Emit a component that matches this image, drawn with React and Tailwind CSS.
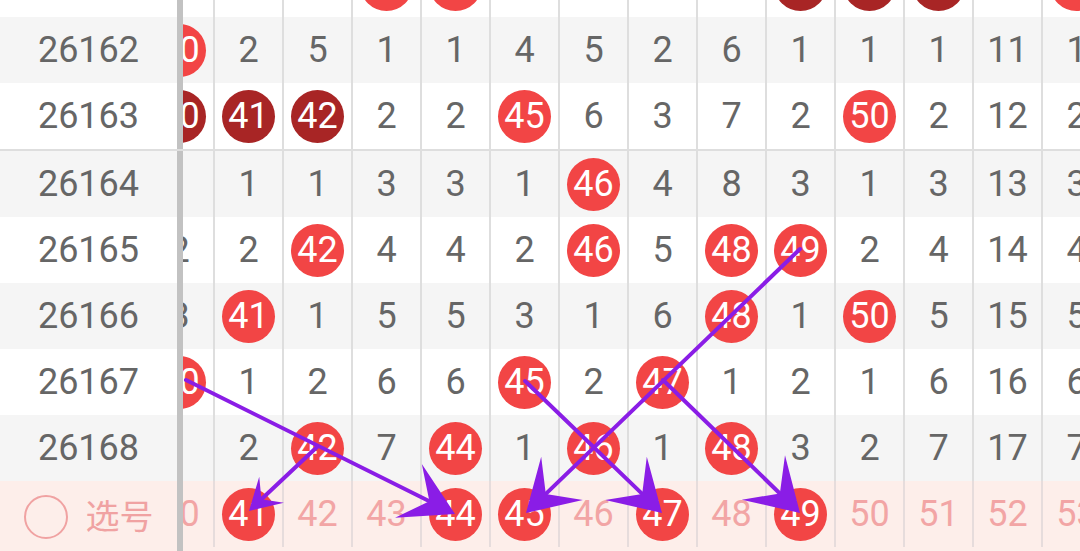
import React from "react"

// columns 40..53, "R" = red ball, "D" = dark ball
const rows = [
  { no: "", gray: false, cells: ["", "", "", "R", "R", "", "", "", "", "D", "D", "D", "", "R"], blank: true },
  { no: "26162", gray: true, cells: ["R", 2, 5, 1, 1, 4, 5, 2, 6, 1, 1, 1, 11, 1] },
  { no: "26163", gray: false, line: true, cells: ["D", "D", "D", 2, 2, "R", 6, 3, 7, 2, "R", 2, 12, 2] },
  { no: "26164", gray: true, cells: [1, 1, 1, 3, 3, 1, "R", 4, 8, 3, 1, 3, 13, 3] },
  { no: "26165", gray: false, cells: [2, 2, "R", 4, 4, 2, "R", 5, "R", "R", 2, 4, 14, 4] },
  { no: "26166", gray: true, cells: [3, "R", 1, 5, 5, 3, 1, 6, "R", 1, "R", 5, 15, 5] },
  { no: "26167", gray: false, cells: ["R", 1, 2, 6, 6, "R", 2, "R", 1, 2, 1, 6, 16, 6] },
  { no: "26168", gray: true, cells: [1, 2, "R", 7, "R", 1, "R", 1, "R", 3, 2, 7, 17, 7] },
]

const picked = [41, 44, 45, 47, 49]

const arrows = [
  [186, 380, 455, 514, 52, 30],
  [317, 447, 249, 511, 31, 18],
  [800, 249, 526, 513, 50, 30],
  [525, 381, 662, 513, 50, 30],
  [663, 380, 800, 513, 51, 31],
]

function Ball({ n, dark }) {
  return (
    <div
      className={`w-[53px] h-[53px] shrink-0 rounded-full flex items-center justify-center text-white ${
        dark ? "bg-[#a82525]" : "bg-[#f24545]"
      }`}
    >
      {n}
    </div>
  )
}

function Cell({ children }) {
  return (
    <div className="w-[69px] shrink-0 border-l-2 border-[#dedede] flex items-center justify-center">
      {children}
    </div>
  )
}

function Arrow({ a }) {
  const [x1, y1, x2, y2, len, w] = a
  const dx = x2 - x1
  const dy = y2 - y1
  const d = Math.hypot(dx, dy)
  const ux = dx / d
  const uy = dy / d
  const nx = -uy
  const ny = ux
  const bx = x2 - ux * len
  const by = y2 - uy * len
  const mx = x2 - ux * len * 0.55
  const my = y2 - uy * len * 0.55
  const pts = [
    [x2, y2],
    [bx + nx * w, by + ny * w],
    [mx, my],
    [bx - nx * w, by - ny * w],
  ]
    .map((p) => p.join(","))
    .join(" ")
  return (
    <g>
      <line x1={x1} y1={y1} x2={mx} y2={my} stroke="#8a1de6" strokeWidth="4" strokeLinecap="round" />
      <polygon points={pts} fill="#8a1de6" />
    </g>
  )
}

export default function App() {
  return (
    <div className="relative w-[1080px] h-[551px] overflow-hidden bg-white font-['Roboto','Noto_Sans_CJK_SC',sans-serif] text-[36px] leading-none">
      <div className="-mt-[49px]">
        {rows.map((row, r) => (
          <div
            key={r}
            className={`flex ${row.line ? "h-[68px] border-b-2 border-[#dedede]" : "h-[66px]"} ${
              row.gray ? "bg-[#f5f5f5]" : "bg-white"
            }`}
          >
            <div className="w-[177px] shrink-0 flex items-center justify-center text-[#666666]">{row.no}</div>
            <div className="w-[6px] shrink-0 bg-[#c2c2c2]" />
            <div className="flex-1 overflow-hidden">
              <div className="flex h-full -ml-[39px] text-[#666666]">
                {row.cells.map((v, i) => (
                  <Cell key={i}>
                    {v === "R" ? (
                      <Ball n={row.blank ? "" : 40 + i} />
                    ) : v === "D" ? (
                      <Ball n={row.blank ? "" : 40 + i} dark />
                    ) : (
                      v
                    )}
                  </Cell>
                ))}
              </div>
            </div>
          </div>
        ))}

        <div className="flex h-[72px] bg-[#fdeeea]">
          <div className="w-[177px] shrink-0 flex items-center justify-center gap-[18px] text-[#f0a2a2] text-[34px]">
            <div className="w-[44px] h-[44px] rounded-full border-2 border-[#f0a2a2]" />
            <span>选号</span>
          </div>
          <div className="w-[6px] shrink-0 bg-[#c2c2c2]" />
          <div className="flex-1 overflow-hidden">
            <div className="flex h-full -ml-[39px] text-[#f2a5a5]">
              {Array.from({ length: 14 }, (_, i) => 40 + i).map((n) => (
                <div
                  key={n}
                  className="w-[69px] shrink-0 h-[66px] border-l-2 border-[#e6dcdc] flex items-center justify-center"
                >
                  {picked.includes(n) ? <Ball n={n} /> : n}
                </div>
              ))}
            </div>
          </div>
        </div>
      </div>

      <svg className="absolute inset-0 pointer-events-none" width="1080" height="551">
        {arrows.map((a, i) => (
          <Arrow key={i} a={a} />
        ))}
      </svg>
    </div>
  )
}
